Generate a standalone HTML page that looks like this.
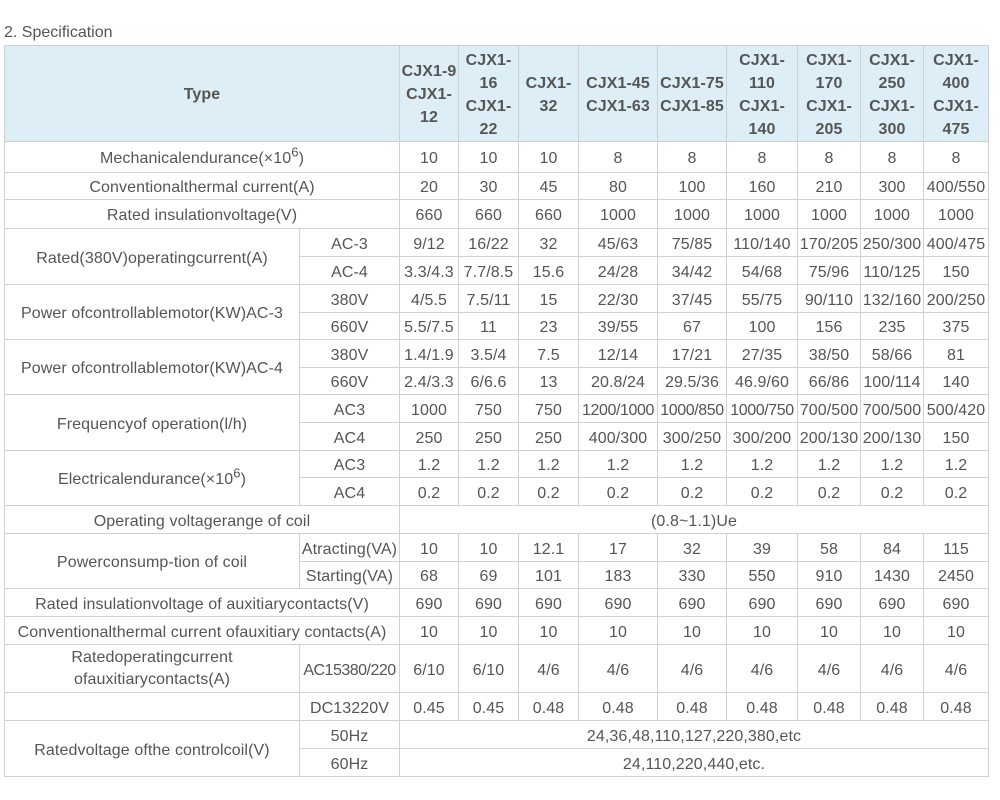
<!DOCTYPE html>
<html><head><meta charset="utf-8"><style>
html,body{margin:0;padding:0;background:#fff;width:1000px;height:800px;overflow:hidden}
body{font-family:"Liberation Sans",Arial,sans-serif;color:#555;font-size:16px}
.t{position:absolute;left:4px;top:24px;font-size:16px;color:#555}
table{position:absolute;left:4px;top:45px;border-collapse:collapse;table-layout:fixed;width:984px}
td{border:1px solid #d0d0d0;text-align:center;padding:0;line-height:18px;overflow:visible;white-space:nowrap;letter-spacing:0.1px}
tbody td{padding-top:4px}
thead td{background:#ddeef6;font-weight:bold;line-height:23px;white-space:normal;font-size:16px;padding-top:2px}
sup{font-size:13px;line-height:0}
tbody td.w{white-space:normal;line-height:22px;padding-top:0}
</style></head><body>
<div class="t">2. Specification</div>
<table>
<colgroup><col style="width:295px"><col style="width:100px"><col style="width:59px"><col style="width:60px"><col style="width:60px"><col style="width:79px"><col style="width:69px"><col style="width:71px"><col style="width:63px"><col style="width:63px"><col style="width:65px"></colgroup>
<thead><tr style="height:96px"><td colspan="2">Type</td><td>CJX1-9<br>CJX1-<br>12</td><td>CJX1-<br>16<br>CJX1-<br>22</td><td>CJX1-<br>32</td><td>CJX1-45<br>CJX1-63</td><td>CJX1-75<br>CJX1-85</td><td>CJX1-<br>110<br>CJX1-<br>140</td><td>CJX1-<br>170<br>CJX1-<br>205</td><td>CJX1-<br>250<br>CJX1-<br>300</td><td>CJX1-<br>400<br>CJX1-<br>475</td></tr></thead>
<tbody>
<tr style="height:31px"><td colspan="2">Mechanicalendurance(×10<sup>6</sup>)</td><td>10</td><td>10</td><td>10</td><td>8</td><td>8</td><td>8</td><td>8</td><td>8</td><td>8</td></tr>
<tr style="height:27px"><td colspan="2">Conventionalthermal current(A)</td><td>20</td><td>30</td><td>45</td><td>80</td><td>100</td><td>160</td><td>210</td><td>300</td><td>400/550</td></tr>
<tr style="height:29px"><td colspan="2">Rated insulationvoltage(V)</td><td>660</td><td>660</td><td>660</td><td>1000</td><td>1000</td><td>1000</td><td>1000</td><td>1000</td><td>1000</td></tr>
<tr style="height:28px"><td rowspan="2">Rated(380V)operatingcurrent(A)</td><td>AC-3</td><td>9/12</td><td>16/22</td><td>32</td><td>45/63</td><td>75/85</td><td>110/140</td><td>170/205</td><td>250/300</td><td>400/475</td></tr>
<tr style="height:28px"><td>AC-4</td><td>3.3/4.3</td><td>7.7/8.5</td><td>15.6</td><td>24/28</td><td>34/42</td><td>54/68</td><td>75/96</td><td>110/125</td><td>150</td></tr>
<tr style="height:28px"><td rowspan="2">Power ofcontrollablemotor(KW)AC-3</td><td>380V</td><td>4/5.5</td><td>7.5/11</td><td>15</td><td>22/30</td><td>37/45</td><td>55/75</td><td>90/110</td><td>132/160</td><td>200/250</td></tr>
<tr style="height:27px"><td>660V</td><td>5.5/7.5</td><td>11</td><td>23</td><td>39/55</td><td>67</td><td>100</td><td>156</td><td>235</td><td>375</td></tr>
<tr style="height:28px"><td rowspan="2">Power ofcontrollablemotor(KW)AC-4</td><td>380V</td><td>1.4/1.9</td><td>3.5/4</td><td>7.5</td><td>12/14</td><td>17/21</td><td>27/35</td><td>38/50</td><td>58/66</td><td>81</td></tr>
<tr style="height:27px"><td>660V</td><td>2.4/3.3</td><td>6/6.6</td><td>13</td><td>20.8/24</td><td>29.5/36</td><td>46.9/60</td><td>66/86</td><td>100/114</td><td>140</td></tr>
<tr style="height:28px"><td rowspan="2">Frequencyof operation(l/h)</td><td>AC3</td><td>1000</td><td>750</td><td>750</td><td style="letter-spacing:-0.4px">1200/1000</td><td style="letter-spacing:-0.4px">1000/850</td><td style="letter-spacing:-0.4px">1000/750</td><td>700/500</td><td>700/500</td><td>500/420</td></tr>
<tr style="height:28px"><td>AC4</td><td>250</td><td>250</td><td>250</td><td>400/300</td><td>300/250</td><td>300/200</td><td>200/130</td><td>200/130</td><td>150</td></tr>
<tr style="height:27px"><td rowspan="2">Electricalendurance(×10<sup>6</sup>)</td><td>AC3</td><td>1.2</td><td>1.2</td><td>1.2</td><td>1.2</td><td>1.2</td><td>1.2</td><td>1.2</td><td>1.2</td><td>1.2</td></tr>
<tr style="height:28px"><td>AC4</td><td>0.2</td><td>0.2</td><td>0.2</td><td>0.2</td><td>0.2</td><td>0.2</td><td>0.2</td><td>0.2</td><td>0.2</td></tr>
<tr style="height:28px"><td colspan="2">Operating voltagerange of coil</td><td colspan="9">(0.8~1.1)Ue</td></tr>
<tr style="height:28px"><td rowspan="2">Powerconsump-tion of coil</td><td>Atracting(VA)</td><td>10</td><td>10</td><td>12.1</td><td>17</td><td>32</td><td>39</td><td>58</td><td>84</td><td>115</td></tr>
<tr style="height:27px"><td>Starting(VA)</td><td>68</td><td>69</td><td>101</td><td>183</td><td>330</td><td>550</td><td>910</td><td>1430</td><td>2450</td></tr>
<tr style="height:28px"><td colspan="2">Rated insulationvoltage of auxitiarycontacts(V)</td><td>690</td><td>690</td><td>690</td><td>690</td><td>690</td><td>690</td><td>690</td><td>690</td><td>690</td></tr>
<tr style="height:28px"><td colspan="2">Conventionalthermal current ofauxitiary contacts(A)</td><td>10</td><td>10</td><td>10</td><td>10</td><td>10</td><td>10</td><td>10</td><td>10</td><td>10</td></tr>
<tr style="height:48px"><td class="w">Ratedoperatingcurrent<br>ofauxitiarycontacts(A)</td><td style="letter-spacing:-0.5px">AC15380/220</td><td>6/10</td><td>6/10</td><td>4/6</td><td>4/6</td><td>4/6</td><td>4/6</td><td>4/6</td><td>4/6</td><td>4/6</td></tr>
<tr style="height:28px"><td></td><td>DC13220V</td><td>0.45</td><td>0.45</td><td>0.48</td><td>0.48</td><td>0.48</td><td>0.48</td><td>0.48</td><td>0.48</td><td>0.48</td></tr>
<tr style="height:28px"><td rowspan="2">Ratedvoltage ofthe controlcoil(V)</td><td>50Hz</td><td colspan="9">24,36,48,110,127,220,380,etc</td></tr>
<tr style="height:28px"><td>60Hz</td><td colspan="9">24,110,220,440,etc.</td></tr>
</tbody></table>
</body></html>
